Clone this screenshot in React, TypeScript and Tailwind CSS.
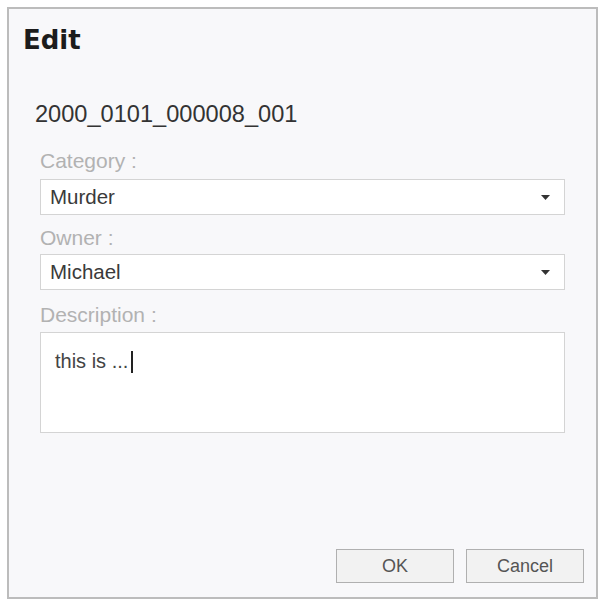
import { useState } from 'react';

function Caret() {
  return (
    <svg width="9" height="5" viewBox="0 0 9 5" className="shrink-0">
      <path d="M0 0 H9 L4.5 5 Z" fill="#333" />
    </svg>
  );
}

function SelectBox({ value }: { value: string }) {
  return (
    <div className="flex h-[36px] items-center justify-between border border-[#d4d4d4] bg-white pl-[9px] pr-[14px]">
      <span className="text-[20.5px] leading-[20px] text-[#3a3a3a]">{value}</span>
      <Caret />
    </div>
  );
}

export default function App() {
  const [category] = useState('Murder');
  const [owner] = useState('Michael');

  return (
    <div className="h-[601px] w-[601px] bg-white pl-[7px] pt-[7px] font-['Liberation_Sans',Arial,sans-serif]">
      <div className="flex h-[592px] w-[591px] flex-col border-2 border-[#bcbcbc] bg-[#f8f8fa]">
        <h1 className="ml-[14px] mt-[18px] font-['DejaVu_Sans',sans-serif] text-[26px] font-bold leading-[26px] text-[#1c1c1c]">
          Edit
        </h1>
        <p className="ml-[26px] mt-[49px] text-[23.6px] leading-[24px] text-[#333]">2000_0101_000008_001</p>

        <div className="flex flex-col px-[31px]">
          <label className="mt-[24px] text-[21px] leading-[21px] text-[#b2b2b2]">Category :</label>
          <div className="mt-[8px]">
            <SelectBox value={category} />
          </div>

          <label className="mt-[12px] text-[21px] leading-[21px] text-[#b2b2b2]">Owner :</label>
          <div className="mt-[6px]">
            <SelectBox value={owner} />
          </div>

          <label className="mt-[14px] text-[21px] leading-[21px] text-[#b2b2b2]">Description :</label>
          <div className="mt-[7px] h-[101px] border border-[#d4d4d4] bg-white pl-[14px] pt-[13px]">
            <span className="text-[20px] leading-[20px] text-[#444]">this is ...</span>
            <span className="ml-[3px] inline-block h-[22px] w-[2px] translate-y-[5px] bg-[#222]" />
          </div>
        </div>

        <div className="mt-auto flex justify-end gap-[12px] pb-[14px] pr-[12px]">
          <button className="h-[34px] w-[118px] border border-[#b0b0b0] bg-[#f2f2f2] text-[18px] text-[#555]">OK</button>
          <button className="h-[34px] w-[118px] border border-[#b0b0b0] bg-[#f2f2f2] text-[18px] text-[#555]">Cancel</button>
        </div>
      </div>
    </div>
  );
}
